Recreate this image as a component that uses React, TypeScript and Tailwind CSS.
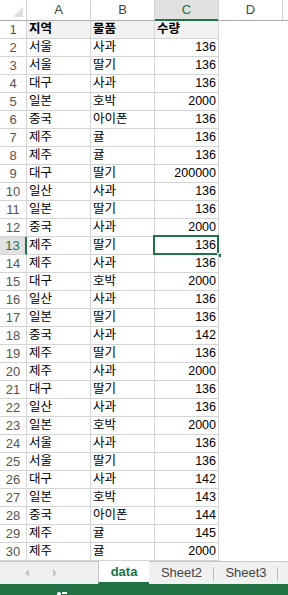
import { Fragment } from 'react';

type Row = [string, string, string];

const rows: Row[] = [
  ['서울', '사과', '136'],
  ['서울', '딸기', '136'],
  ['대구', '사과', '136'],
  ['일본', '호박', '2000'],
  ['중국', '아이폰', '136'],
  ['제주', '귤', '136'],
  ['제주', '귤', '136'],
  ['대구', '딸기', '200000'],
  ['일산', '사과', '136'],
  ['일본', '딸기', '136'],
  ['중국', '사과', '2000'],
  ['제주', '딸기', '136'],
  ['제주', '사과', '136'],
  ['대구', '호박', '2000'],
  ['일산', '사과', '136'],
  ['일본', '딸기', '136'],
  ['중국', '사과', '142'],
  ['제주', '딸기', '136'],
  ['제주', '사과', '2000'],
  ['대구', '딸기', '136'],
  ['일산', '사과', '136'],
  ['일본', '호박', '2000'],
  ['서울', '사과', '136'],
  ['서울', '딸기', '136'],
  ['대구', '사과', '142'],
  ['일본', '호박', '143'],
  ['중국', '아이폰', '144'],
  ['제주', '귤', '145'],
  ['제주', '귤', '2000'],
];

const SELECTED = 13;

export default function App() {
  return (
    <div
      className="w-[288px] h-[595px] overflow-hidden bg-white flex flex-col text-[12px] text-black"
      style={{ fontFamily: "'Liberation Sans', 'Noto Sans CJK KR', sans-serif" }}
    >
      {/* column headers */}
      <div className="flex h-[21px] shrink-0 border-b border-[#ababab]">
        <div className="w-[27px] shrink-0 border-r border-[#d4d4d4] flex items-end justify-end p-[3px]">
          <div className="w-0 h-0 border-l-[10px] border-l-transparent border-b-[10px] border-b-[#dfdfdf]" />
        </div>
        {['A', 'B'].map((c) => (
          <div
            key={c}
            className="w-[64px] shrink-0 border-r border-[#d4d4d4] flex items-center justify-center text-[#444] text-[13px]"
          >
            {c}
          </div>
        ))}
        <div className="w-[64px] shrink-0 border-r border-[#d4d4d4] bg-[#e1e1e1] flex items-center justify-center text-[#217346] text-[13px] relative">
          C
          <div className="absolute left-0 right-0 -bottom-px h-[2px] bg-[#217346]" />
        </div>
        <div className="w-[64px] shrink-0 border-r border-[#d4d4d4] flex items-center justify-center text-[#444] text-[13px]">
          D
        </div>
      </div>

      {/* grid */}
      <div className="flex flex-col shrink-0">
        {[['지역', '물품', '수량'] as Row, ...rows].map((r, i) => {
          const n = i + 1;
          const head = n === 1;
          const sel = n === SELECTED;
          return (
            <div key={n} className="flex h-[18px]">
              <div
                className={`w-[27px] shrink-0 border-b border-r flex items-center justify-center text-[13px] relative ${
                  sel
                    ? 'bg-[#e1e1e1] text-[#217346] border-b-[#d4d4d4] border-r-[#217346] border-r-2'
                    : 'text-[#555] border-[#d4d4d4]'
                }`}
              >
                {n}
              </div>
              {r.map((v, j) => (
                <div
                  key={j}
                  className={`w-[64px] shrink-0 border-b border-r border-[#d4d4d4] flex items-center leading-[17px] relative ${
                    j === 2 && !head ? 'justify-end pr-[2px] text-[12.5px]' : 'pl-[2px] text-[12.5px]'
                  } ${head ? 'bg-[#f2f2f2] font-bold' : ''}`}
                >
                  {v}
                  {sel && j === 2 && (
                    <Fragment>
                      <div className="absolute -left-[2px] -top-[2px] w-[66px] h-[20px] border-2 border-[#217346]" />
                      <div className="absolute -right-[4px] -bottom-[4px] w-[5px] h-[5px] bg-[#217346] border border-white" />
                    </Fragment>
                  )}
                </div>
              ))}
            </div>
          );
        })}
      </div>

      {/* sheet tabs */}
      <div className="flex h-[23px] shrink-0 bg-[#f0f0f0] border-t border-[#c6c6c6]">
        <div className="w-[98px] shrink-0 flex items-center pl-[25px] gap-[24px]">
          <div className="w-0 h-0 border-y-[4px] border-y-transparent border-r-[4px] border-r-[#c4c4c4]" />
          <div className="w-0 h-0 border-y-[4px] border-y-transparent border-l-[4px] border-l-[#c4c4c4]" />
        </div>
        <div className="w-[51px] shrink-0 bg-white border-l border-[#c6c6c6] flex items-center justify-center font-bold text-[13px] text-[#217346] border-b-2 border-b-[#217346] -mt-px">
          data
        </div>
        <div className="w-[65px] shrink-0 flex items-center justify-center text-[13px] text-[#444] relative">
          Sheet2
          <div className="absolute right-0 top-[5px] h-[14px] w-px bg-[#bdbdbd]" />
        </div>
        <div className="w-[64px] shrink-0 flex items-center justify-center text-[13px] text-[#444] relative">
          Sheet3
          <div className="absolute right-0 top-[5px] h-[14px] w-px bg-[#bdbdbd]" />
        </div>
      </div>

      {/* status bar */}
      <div className="flex-1 bg-[#217346] relative">
        <div className="absolute left-[57px] top-[8px] w-[4px] h-[4px] rounded-full bg-white" />
        <div className="absolute left-[62px] top-[8px] w-[5px] h-[2px] bg-white" />
      </div>
    </div>
  );
}
